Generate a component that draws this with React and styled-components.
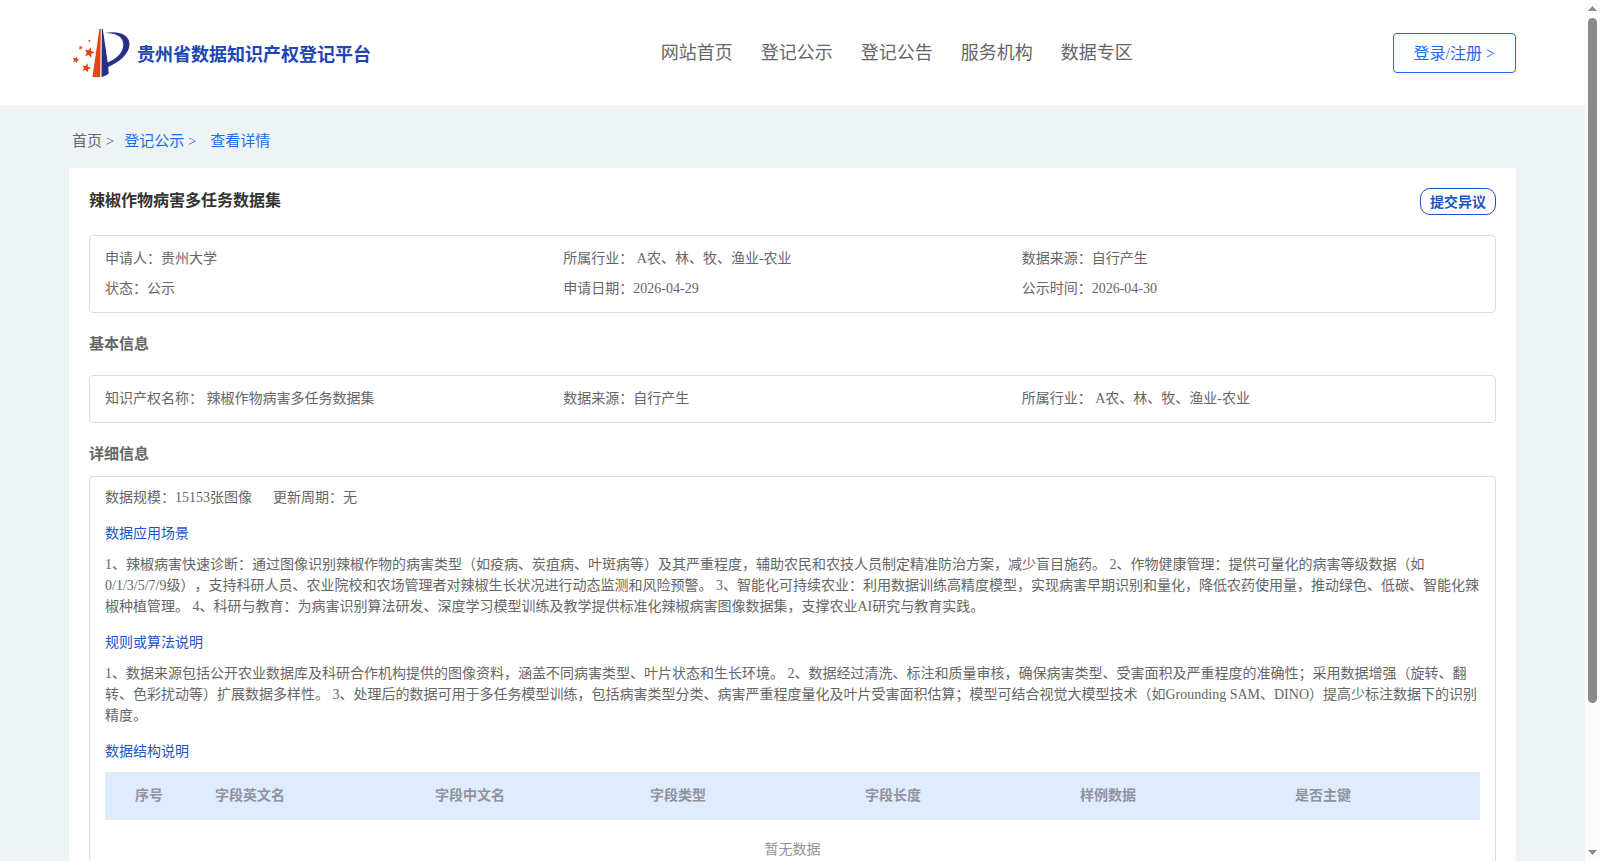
import styled, {createGlobalStyle} from 'styled-components'

const GlobalStyle = createGlobalStyle`
  * {
    box-sizing: border-box;
  }

  body {
    margin: 0;
    color: #666666;
    font-family: "Liberation Serif", "Noto Sans CJK SC", serif;
    font-size: 14px;
    line-height: 21px;
    text-spacing-trim: space-all;
  }

  h1, h2, h3, p, ol, dl, dd {
    margin: 0;
    padding: 0;
  }

  a {
    color: inherit;
    text-decoration: none;
  }

  button {
    font-family: inherit;
    cursor: pointer;
  }
`

const FlexContainer = styled.div`
  display: flex;
`

const AppWrapper = styled(FlexContainer)`
  height: 100vh;
  overflow: hidden;
`

const Page = styled.div`
  flex: 1;
  min-width: 0;
  overflow-y: auto;
  scrollbar-width: none;
  background-color: #eef3f6;
`

const TopNav = styled.header`
  display: flex;
  align-items: center;
  justify-content: space-between;
  height: 105px;
  padding: 0 69px;
  background-color: #ffffff;
`

const Brand = styled.a`
  display: flex;
  align-items: center;
  gap: 6px;
  padding: 0 30px 0 3px;
  font-size: 18px;
  font-weight: bold;
  && {
    color: #2145b4;
  }
`

const BrandName = styled.span`
  padding-top: 6px;
`

const NavLinks = styled.nav`
  display: flex;
  gap: 28px;
  font-size: 18px;
  line-height: 24px;
`

const LoginButton = styled.button`
  height: 40px;
  padding: 0 20px 2px;
  background-color: #ffffff;
  border: 1px solid #1a6df0;
  border-radius: 4px;
  color: #1a6df0;
  font-size: 16px;
`

const Main = styled.main`
  padding: 0 69px 80px;
`

const Breadcrumb = styled.nav`
  display: flex;
  align-items: center;
  gap: 10px;
  height: 63px;
  padding: 10px 3px 0;
  font-size: 15px;
`

const Crumb = styled.a`
  && {
    color: ${props => props.$active ? '#1a6df0' : '#666666'};
  }
  white-space: pre;
`

const Card = styled.article`
  padding: 20px;
  background-color: #ffffff;
`

const TitleContainer = styled(FlexContainer)`
  align-items: flex-start;
  justify-content: space-between;
  height: 47px;
`

const Title = styled.h1`
  color: #333333;
  font-size: 16px;
  line-height: 25px;
`

const ObjectionButton = styled.button`
  height: 27px;
  padding: 0 9px 2px;
  background-color: #ffffff;
  border: 1px solid #1a56c4;
  border-radius: 10px;
  color: #1a56c4;
  font-size: 14px;
  font-weight: bold;
`

const SectionTitle = styled.h2`
  padding: ${props => props.$tight ? '20px 0 11px' : '20px 0'};
  font-size: 15px;
  line-height: 22px;
`

const InfoBox = styled.dl`
  display: grid;
  grid-template-columns: repeat(3, 1fr);
  padding: 8px 15px;
  border: 1px solid #dddddd;
  border-radius: 4px;
  line-height: 30px;
`

const InfoItem = styled(FlexContainer)`
  white-space: pre;
`

const DetailBox = styled.section`
  padding: 10px 15px 15px;
  border: 1px solid #dddddd;
  border-radius: 4px;
`

const Summary = styled(FlexContainer)`
  gap: 21px;
`

const DetailTitle = styled.h3`
  padding: 15px 0 10px;
  color: #1a56c4;
  font-size: 14px;
  font-weight: normal;
`

const FieldTable = styled.table`
  width: 100%;
  table-layout: fixed;
  border-collapse: separate;
  border-spacing: 0;
  color: #909399;
`

const HeadCell = styled.th`
  width: ${props => props.$width};
  height: 48px;
  padding: 0 10px;
  padding-left: ${props => props.$index ? '30px' : '10px'};
  background-color: #dfecff;
  border-bottom: 1px solid #ebeef5;
  text-align: left;
`

const EmptyCell = styled.td`
  height: 60px;
  padding: 0;
  border-bottom: 1px solid #ebeef5;
  text-align: center;
`

const ScrollRail = styled.div`
  display: flex;
  flex-direction: column;
  align-items: center;
  width: 15px;
  padding: 6px 0;
  background-color: #fcfcfc;
`

const ScrollTrack = styled.div`
  flex: 1;
  width: 9px;
  margin: 7px 0;
`

const ScrollThumb = styled.div`
  width: 9px;
  height: 83%;
  border-radius: 5px;
  background-color: #8b8b8b;
`

const navLinks = ['网站首页', '登记公示', '登记公告', '服务机构', '数据专区']

const overview = [
    ['申请人：', '贵州大学'],
    ['所属行业： ', 'A农、林、牧、渔业-农业'],
    ['数据来源：', '自行产生'],
    ['状态：', '公示'],
    ['申请日期：', '2026-04-29'],
    ['公示时间：', '2026-04-30'],
]

const basicInfo = [
    ['知识产权名称： ', '辣椒作物病害多任务数据集'],
    ['数据来源：', '自行产生'],
    ['所属行业： ', 'A农、林、牧、渔业-农业'],
]

const columns = [
    {name: '序号', width: '100px', index: true},
    {name: '字段英文名', width: '220px'},
    {name: '字段中文名', width: '215px'},
    {name: '字段类型', width: '215px'},
    {name: '字段长度', width: '215px'},
    {name: '样例数据', width: '215px'},
    {name: '是否主键', width: 'auto'},
]

function Logo() {
    return (
        <svg width="59" height="50" viewBox="0 0 59 50" aria-hidden="true">
            <path fill="#e8430f" d="M27.400 1 L28.800 1 L28.200 49 L20.500 49 Z"/>
            <path fill="#2a2f86" d="M29.800 1 L30.800 1 L35.700 34.500 C44 31 51 25 51.300 17 C51.500 9 45 5 33 5 C47 2.500 57.300 7 57.500 16 C57.700 26 47 34 36.200 39 L36.700 45.500 C34.500 47.500 32 48.600 29.500 49 Z"/>
            <g fill="#e8430f">
                <Star x={17.3} y={24.5} r={5.5}/>
                <Star x={3.8} y={31.8} r={3.6}/>
                <Star x={14.3} y={40} r={4.8}/>
                <Star x={8.7} y={19.7} r={2.3}/>
                <Star x={17.3} y={12.8} r={1.5}/>
            </g>
        </svg>
    )
}

function Star({x, y, r}) {
    const points = Array.from({length: 10}, (_, i) => {
        const angle = (i * 36 - 75) * Math.PI / 180
        const radius = i % 2 ? r * 0.45 : r
        return `${x + radius * Math.cos(angle)},${y + radius * Math.sin(angle)}`
    })
    return <polygon points={points.join(' ')}/>
}

function InfoList({items}) {
    return (
        <InfoBox>
            {items.map(([label, value]) => (
                <InfoItem key={label}>
                    <dt>{label}</dt>
                    <dd>{value}</dd>
                </InfoItem>
            ))}
        </InfoBox>
    )
}

function App() {
    return (
        <AppWrapper>
            <GlobalStyle/>
            <Page>
                <TopNav>
                    <Brand href="#">
                        <Logo/>
                        <BrandName>贵州省数据知识产权登记平台</BrandName>
                    </Brand>
                    <NavLinks>
                        {navLinks.map(link => <a href="#" key={link}>{link}</a>)}
                    </NavLinks>
                    <LoginButton>登录/注册 &gt;</LoginButton>
                </TopNav>
                <Main>
                    <Breadcrumb>
                        <Crumb href="#">首页 &gt;</Crumb>
                        <Crumb href="#" $active>{'登记公示 > '}</Crumb>
                        <Crumb href="#" $active>查看详情</Crumb>
                    </Breadcrumb>
                    <Card>
                        <TitleContainer>
                            <Title>辣椒作物病害多任务数据集</Title>
                            <ObjectionButton>提交异议</ObjectionButton>
                        </TitleContainer>
                        <InfoList items={overview}/>
                        <SectionTitle>基本信息</SectionTitle>
                        <InfoList items={basicInfo}/>
                        <SectionTitle $tight>详细信息</SectionTitle>
                        <DetailBox>
                            <Summary>
                                <span>数据规模：15153张图像</span>
                                <span>更新周期：无</span>
                            </Summary>
                            <DetailTitle>数据应用场景</DetailTitle>
                            <p>1、辣椒病害快速诊断：通过图像识别辣椒作物的病害类型（如疫病、炭疽病、叶斑病等）及其严重程度，辅助农民和农技人员制定精准防治方案，减少盲目施药。
                                2、作物健康管理：提供可量化的病害等级数据（如0/1/3/5/7/9级），支持科研人员、农业院校和农场管理者对辣椒生长状况进行动态监测和风险预警。
                                3、智能化可持续农业：利用数据训练高精度模型，实现病害早期识别和量化，降低农药使用量，推动绿色、低碳、智能化辣椒种植管理。
                                4、科研与教育：为病害识别算法研发、深度学习模型训练及教学提供标准化辣椒病害图像数据集，支撑农业AI研究与教育实践。</p>
                            <DetailTitle>规则或算法说明</DetailTitle>
                            <p>1、数据来源包括公开农业数据库及科研合作机构提供的图像资料，涵盖不同病害类型、叶片状态和生长环境。
                                2、数据经过清洗、标注和质量审核，确保病害类型、受害面积及严重程度的准确性；采用数据增强（旋转、翻转、色彩扰动等）扩展数据多样性。
                                3、处理后的数据可用于多任务模型训练，包括病害类型分类、病害严重程度量化及叶片受害面积估算；模型可结合视觉大模型技术（如Grounding
                                SAM、DINO）提高少标注数据下的识别精度。</p>
                            <DetailTitle>数据结构说明</DetailTitle>
                            <FieldTable>
                                <thead>
                                    <tr>
                                        {columns.map(({name, width, index}) => (
                                            <HeadCell key={name} $width={width} $index={index}>{name}</HeadCell>
                                        ))}
                                    </tr>
                                </thead>
                                <tbody>
                                    <tr>
                                        <EmptyCell colSpan={columns.length}>暂无数据</EmptyCell>
                                    </tr>
                                </tbody>
                            </FieldTable>
                        </DetailBox>
                    </Card>
                </Main>
            </Page>
            <ScrollRail aria-hidden="true">
                <svg width="9" height="5"><path fill="#8b8b8b" d="M0 5 L4.500 0 L9 5 Z"/></svg>
                <ScrollTrack>
                    <ScrollThumb/>
                </ScrollTrack>
                <svg width="9" height="5"><path fill="#8b8b8b" d="M0 0 L4.500 5 L9 0 Z"/></svg>
            </ScrollRail>
        </AppWrapper>
    )
}

export default App
